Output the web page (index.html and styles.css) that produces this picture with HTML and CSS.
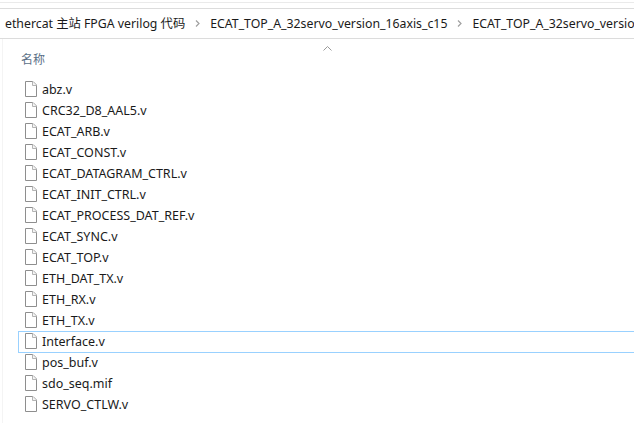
FILE: index.html
```html
<!DOCTYPE html>
<html lang="zh">
<head>
<meta charset="utf-8">
<title>Explorer</title>
<link rel="stylesheet" href="styles.css">
</head>
<body>
<svg class="defs" width="0" height="0" aria-hidden="true">
  <symbol id="file" viewBox="0 0 12 16">
    <path d="M.5.5h7.5l3.5 3.5v11.500h-11z" fill="#fff" stroke="#8e8e8e"/>
    <path d="M7.500.5v4h4" fill="#f4f4f4" stroke="#b4b4b4"/>
  </symbol>
</svg>
<div class="topline"></div>
<nav class="crumbs">
  <span class="crumb">ethercat 主站 FPGA verilog 代码</span>
  <svg class="sep" width="5" height="7" viewBox="0 0 5 7"><path d="M1 .5 4 3.500 1 6.500" fill="none" stroke="#a0a0a0" stroke-width="1.200"/></svg>
  <span class="crumb">ECAT_TOP_A_32servo_version_16axis_c15</span>
  <svg class="sep" width="5" height="7" viewBox="0 0 5 7"><path d="M1 .5 4 3.500 1 6.500" fill="none" stroke="#a0a0a0" stroke-width="1.200"/></svg>
  <span class="crumb">ECAT_TOP_A_32servo_version_16axis_c15</span>
</nav>
<main class="pane">
  <div class="sort"><svg width="9" height="5" viewBox="0 0 9 5"><path d="M.5 4.500 4.500.5l4 4" fill="none" stroke="#9a9a9a"/></svg></div>
  <div class="head">名称</div>
  <ul class="files">
    <li class="row"><svg class="ico"><use href="#file"/></svg>abz.v</li>
    <li class="row"><svg class="ico"><use href="#file"/></svg>CRC32_D8_AAL5.v</li>
    <li class="row"><svg class="ico"><use href="#file"/></svg>ECAT_ARB.v</li>
    <li class="row"><svg class="ico"><use href="#file"/></svg>ECAT_CONST.v</li>
    <li class="row"><svg class="ico"><use href="#file"/></svg>ECAT_DATAGRAM_CTRL.v</li>
    <li class="row"><svg class="ico"><use href="#file"/></svg>ECAT_INIT_CTRL.v</li>
    <li class="row"><svg class="ico"><use href="#file"/></svg>ECAT_PROCESS_DAT_REF.v</li>
    <li class="row"><svg class="ico"><use href="#file"/></svg>ECAT_SYNC.v</li>
    <li class="row"><svg class="ico"><use href="#file"/></svg>ECAT_TOP.v</li>
    <li class="row"><svg class="ico"><use href="#file"/></svg>ETH_DAT_TX.v</li>
    <li class="row"><svg class="ico"><use href="#file"/></svg>ETH_RX.v</li>
    <li class="row"><svg class="ico"><use href="#file"/></svg>ETH_TX.v</li>
    <li class="row selected"><svg class="ico"><use href="#file"/></svg>Interface.v</li>
    <li class="row"><svg class="ico"><use href="#file"/></svg>pos_buf.v</li>
    <li class="row"><svg class="ico"><use href="#file"/></svg>sdo_seq.mif</li>
    <li class="row"><svg class="ico"><use href="#file"/></svg>SERVO_CTLW.v</li>
  </ul>
</main>
</body>
</html>
```

FILE: styles.css
```css
* { box-sizing: border-box; }
html, body { margin: 0; height: 100%; overflow: hidden; }
body {
  width: 634px;
  height: 423px;
  background: #fff;
  font-family: "Noto Sans", "Noto Sans CJK SC", sans-serif;
  font-size: 12.300px;
  color: #1a1a1a;
  display: flex;
  flex-direction: column;
}
.defs { position: absolute; }
.topline {
  height: 9px;
  flex: none;
  background: linear-gradient(#fff 2px, #eaeaea 2px, #eaeaea 3px, #fff 3px);
  border-bottom: 1px solid #dcdcdc;
}
.crumbs {
  flex: none;
  height: 30px;
  border-bottom: 1px solid #dcdcdc;
  display: flex;
  align-items: center;
  padding-left: 5px;
  gap: 10px;
  white-space: nowrap;
  overflow: hidden;
  padding-bottom: 1px;
}
.crumb { flex: none; }
.sep { flex: none; }
.pane {
  flex: 1;
  margin-left: 2px;
  border-left: 1px solid #f4f4f4;
  display: flex;
  flex-direction: column;
  min-height: 0;
}
.sort {
  height: 5px;
  margin-top: 7px;
  padding-left: 320px;
  display: flex;
  align-items: center;
}
.head {
  height: 18px;
  padding-left: 18px;
  color: #5a6f86;
  font-size: 12px;
  line-height: 18px;
}
.files {
  list-style: none;
  margin: 10px 0 0;
  padding: 0 0 0 15px;
  font-size: 12.500px;
}
.row {
  height: 22px;
  margin-bottom: -1px;
  display: flex;
  align-items: center;
  gap: 5px;
  padding-left: 6px;
  padding-bottom: 2px;
  border: 1px solid transparent;
  border-right: 0;
}
.selected { border-color: #99d1ff; }
.ico { width: 12px; height: 16px; flex: none; }
```
